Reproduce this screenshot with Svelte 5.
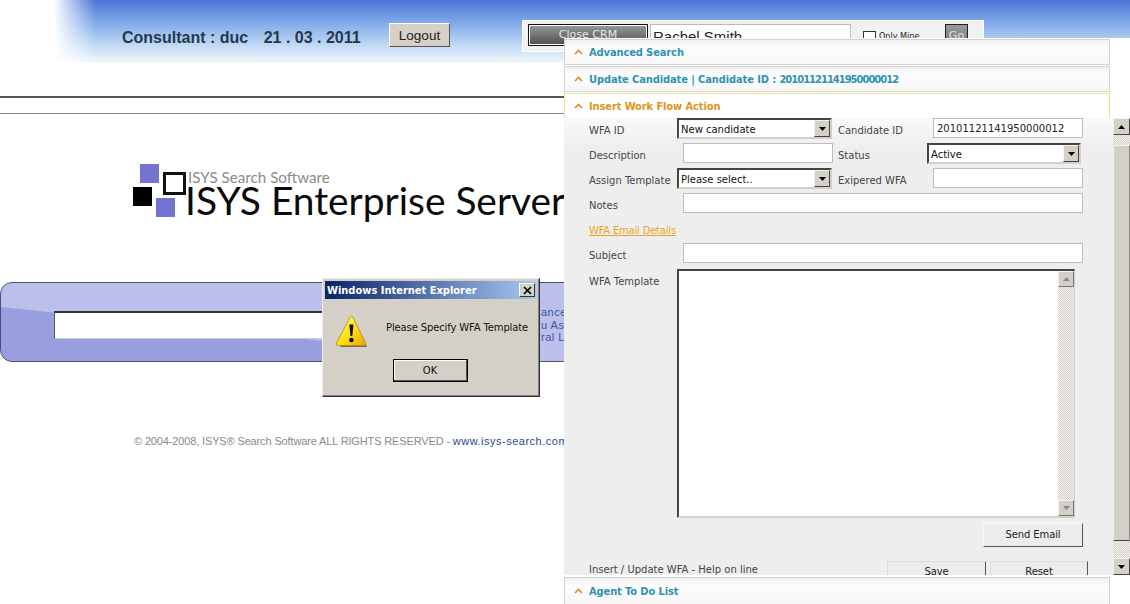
<script>
    const textBits = ['anced', 'u Ass', 'ral L'];
</script>

{#snippet chevron()}
    <svg class="chevron" width="9" height="6" viewBox="0 0 9 6"><path d="M1 5 L4.5 1.5 L8 5" fill="none" stroke="#d98a2b" stroke-width="1.6"/></svg>
{/snippet}

{#snippet arrow(dir, fill = '#000')}
    <svg width="7" height="4" viewBox="0 0 7 4">
        {#if dir === 'up'}
            <path d="M3.5 0 L7 4 L0 4 Z" {fill}/>
        {:else}
            <path d="M0 0 L7 0 L3.5 4 Z" {fill}/>
        {/if}
    </svg>
{/snippet}

{#snippet select(value, cls = '')}
    <div class="select {cls}">
        <span>{value}</span>
        <div class="sbtn">{@render arrow('down')}</div>
    </div>
{/snippet}

<div class="page">
    <header class="top">
        <div class="fade"></div>
        <div class="who">Consultant : duc <span class="date">21 . 03 . 2011</span></div>
        <button class="logout">Logout</button>
        <div class="quick">
            <div class="close-crm">Close CRM</div>
            <div class="quick-input">Rachel Smith</div>
            <div class="check"></div>
            <span class="mine">Only Mine</span>
            <div class="go">Go</div>
        </div>
    </header>

    <div class="rules"></div>

    <div class="logo">
        <svg width="54" height="55" viewBox="0 0 54 55">
            <rect x="7" y="0" width="19" height="19" fill="#7373d2"/>
            <rect x="31.500" y="9.500" width="20" height="20" fill="none" stroke="#111" stroke-width="3"/>
            <rect x="0" y="23" width="19" height="19" fill="#000"/>
            <rect x="23" y="34" width="19" height="19" fill="#7373d2"/>
        </svg>
        <div class="logo-text">
            <div class="logo-small">ISYS Search Software</div>
            <div class="logo-big">ISYS Enterprise Server</div>
        </div>
    </div>

    <div class="searchbar">
        <div class="search-input"></div>
        <div class="search-links">
            {#each textBits as bit}
                <div>{bit}</div>
            {/each}
        </div>
    </div>

    <div class="copy">© 2004-2008, ISYS® Search Software ALL RIGHTS RESERVED - <span class="link">www.isys-search.com</span></div>

    <div class="panel">
        <div class="acc">
            {@render chevron()}
            <span>Advanced Search</span>
        </div>
        <div class="acc">
            {@render chevron()}
            <span>Update Candidate | Candidate ID : <span class="digits">20101121141950000012</span></span>
        </div>
        <div class="acc active">
            {@render chevron()}
            <span>Insert Work Flow Action</span>
        </div>

        <div class="scroller">
            <div class="form">
                <div class="grid">
                    <span class="lbl">WFA ID</span>
                    {@render select('New candidate')}
                    <span class="lbl">Candidate ID</span>
                    <div class="input right">20101121141950000012</div>

                    <span class="lbl">Description</span>
                    <div class="input"></div>
                    <span class="lbl">Status</span>
                    {@render select('Active', 'narrow')}

                    <span class="lbl">Assign Template</span>
                    {@render select('Please select..')}
                    <span class="lbl">Exipered WFA</span>
                    <div class="input right"></div>

                    <span class="lbl">Notes</span>
                    <div class="input wide"></div>

                    <a class="email" href="#details">WFA Email Details</a>

                    <span class="lbl">Subject</span>
                    <div class="input wide"></div>
                </div>

                <div class="tpl-row">
                    <span class="lbl tpl-lbl">WFA Template</span>
                    <div class="textarea">
                        <div class="tscroll">
                            <div class="sbtn flat">{@render arrow('up', '#8a8a84')}</div>
                            <div class="track"></div>
                            <div class="sbtn flat">{@render arrow('down', '#8a8a84')}</div>
                        </div>
                    </div>
                </div>

                <div class="send-row">
                    <button class="btn send">Send Email</button>
                </div>

                <div class="foot">
                    <span class="help">Insert / Update WFA - Help on line</span>
                    <button class="btn save">Save</button>
                    <button class="btn reset">Reset</button>
                </div>
            </div>

            <div class="vscroll">
                <div class="sbtn big">{@render arrow('up')}</div>
                <div class="track short"></div>
                <div class="thumb"></div>
                <div class="track short2"></div>
                <div class="sbtn big">{@render arrow('down')}</div>
            </div>
        </div>

        <div class="acc last">
            {@render chevron()}
            <span>Agent To Do List</span>
        </div>
    </div>

    <div class="dialog">
        <div class="titlebar">
            <span>Windows Internet Explorer</span>
            <div class="x">
                <svg width="9" height="9" viewBox="0 0 9 9"><path d="M1 1 L8 8 M8 1 L1 8" stroke="#000" stroke-width="1.7"/></svg>
            </div>
        </div>
        <div class="dbody">
            <svg class="warn" width="32" height="34" viewBox="0 0 32 34">
                <defs>
                    <linearGradient id="warn-fill" x1="0" y1="0" x2="1" y2="1">
                        <stop offset="0" stop-color="#fff7a0"/>
                        <stop offset="0.55" stop-color="#ffdd10"/>
                        <stop offset="1" stop-color="#e8a800"/>
                    </linearGradient>
                </defs>
                <path d="M4 32 L31 32 L18 6 Z" fill="#77725c"/>
                <path d="M14.500 1.500 Q15.500 0.500 16.500 1.500 L29.500 28 Q30 30.500 28 30.500 L2 30.500 Q0 30.500 0.500 28 Z" fill="url(#warn-fill)" stroke="#b08a00" stroke-width="0.800"/>
                <path d="M13.300 9.500 L17.500 9.500 L16.300 21 L14.500 21 Z" fill="#111"/>
                <circle cx="15.400" cy="25" r="2.300" fill="#111"/>
            </svg>
            <span class="msg">Please Specify WFA Template</span>
        </div>
        <div class="dfoot">
            <button class="ok">OK</button>
        </div>
    </div>
</div>

<style>
    :global(body) {
        margin: 0;
        background: #fff;
    }

    .page {
        position: relative;
        width: 1130px;
        height: 604px;
        overflow: hidden;
        background: #fff;
        font-family: "DejaVu Sans", sans-serif;
        font-size: 10px;
        color: #222;
    }

    button {
        font-family: inherit;
        cursor: default;
    }

    /* header band */
    .top {
        position: relative;
        height: 63px;
        display: flex;
        align-items: flex-start;
        background: linear-gradient(180deg, #4874d8 0, #6b96e2 14px, #94b9ed 30px, #c6ddf5 47px, #eef6fc 62px, #fff 63px);
    }

    .fade {
        position: absolute;
        left: 0;
        top: 0;
        width: 96px;
        height: 100%;
        background: linear-gradient(90deg, #fff 54px, rgba(255, 255, 255, 0.65) 68px, rgba(255, 255, 255, 0));
    }

    .who {
        position: relative;
        margin: 29px 0 0 122px;
        width: 267px;
        font: bold 16px "Liberation Sans", Arial, sans-serif;
        color: #26374f;
        white-space: nowrap;
    }

    .date {
        margin-left: 11px;
    }

    .logout {
        position: relative;
        margin-top: 23px;
        width: 61px;
        height: 24px;
        padding: 0;
        background: #d6d0c6;
        border: 1px solid;
        border-color: #fff #555 #555 #fff;
        font: 13.500px "Liberation Sans", Arial, sans-serif;
        color: #222;
    }

    .quick {
        margin: 20px 0 0 72px;
        width: 462px;
        height: 32px;
        box-sizing: border-box;
        background: #f1f1f1;
        border: 1px solid #fff;
        padding: 3px 5px;
        display: flex;
        align-items: flex-start;
    }

    .close-crm {
        width: 120px;
        height: 22px;
        box-sizing: border-box;
        border: 1px solid #111;
        outline: 1px solid #fff;
        outline-offset: -2px;
        background: linear-gradient(180deg, #9a9a9a, #4e4e4e);
        text-align: center;
        color: #e8e8e8;
        font-size: 11px;
        line-height: 20px;
    }

    .quick-input {
        margin-left: 2px;
        width: 201px;
        height: 24px;
        box-sizing: border-box;
        background: #fff;
        border: 1px solid #bbb;
        padding-left: 2px;
        font: 15px/24px "Liberation Sans", Arial, sans-serif;
    }

    .check {
        margin: 7px 0 0 12px;
        width: 11px;
        height: 11px;
        border: 1px solid #333;
        background: #fff;
    }

    .mine {
        margin: 7px 0 0 3px;
        width: 66px;
        font: 9px "DejaVu Sans Condensed", "DejaVu Sans", sans-serif;
    }

    .go {
        width: 23px;
        height: 24px;
        box-sizing: border-box;
        border: 1px solid #222;
        background: linear-gradient(180deg, #999, #777);
        text-align: center;
        font-size: 11px;
        line-height: 22px;
        color: #e4e4e4;
    }

    .rules {
        margin-top: 33px;
        height: 15px;
        border-top: 2px solid #555;
        border-bottom: 1px solid #8a8a8a;
    }

    /* logo */
    .logo {
        margin: 50px 0 0 133px;
        display: flex;
        align-items: flex-start;
    }

    .logo-text {
        margin: 6px 0 0 -2px;
        font-family: Lato, "Open Sans", sans-serif;
        white-space: nowrap;
    }

    .logo-small {
        padding-left: 3px;
        font-size: 15.200px;
        line-height: 15px;
        color: #8b8b8b;
    }

    .logo-big {
        font-size: 38.900px;
        line-height: 30px;
        color: #0b0b0b;
    }

    /* search band */
    .searchbar {
        position: relative;
        margin-top: 63px;
        width: 610px;
        height: 80px;
        box-sizing: border-box;
        border: 1px solid #4b4f78;
        border-radius: 12px;
        background: linear-gradient(186deg, #bcbfea 0, #bcbfea 87px, #999ede 88px, #999ede 100%);
    }

    .search-input {
        position: absolute;
        left: 53px;
        top: 28px;
        width: 300px;
        height: 28px;
        box-sizing: border-box;
        background: #fff;
        border-top: 2px solid #333;
        border-left: 1px solid #555;
        border-bottom: 1px solid #ccc;
    }

    .search-links {
        position: absolute;
        left: 540px;
        top: 23px;
        font: 11px/12.500px "Liberation Sans", Arial, sans-serif;
        letter-spacing: 0.5px;
        color: #3a55a8;
    }

    .copy {
        margin: 73px 0 0 134px;
        font: 11px "Liberation Sans", Arial, sans-serif;
        color: #8a8a8a;
        letter-spacing: -0.14px;
        white-space: nowrap;
    }

    .link {
        color: #2b4890;
        letter-spacing: 0.5px;
    }

    /* slide-over panel */
    .panel {
        position: absolute;
        left: 564px;
        top: 38px;
        width: 566px;
        height: 566px;
        box-sizing: border-box;
        padding-top: 1px;
        background: #fff;
        display: flex;
        flex-direction: column;
    }

    .acc {
        width: 546px;
        height: 26px;
        margin-bottom: 1px;
        box-sizing: border-box;
        flex: none;
        display: flex;
        align-items: center;
        gap: 6px;
        padding-left: 9px;
        background: linear-gradient(180deg, #f0f0f0, #fdfdfd 30%, #f7f7f7);
        border: 1px solid #d2d2d2;
        color: #2e93b3;
        font: bold 11px "DejaVu Sans Condensed", "DejaVu Sans", sans-serif;
        letter-spacing: -0.1px;
        white-space: pre;
    }

    .digits {
        letter-spacing: -0.95px;
    }

    .acc.active {
        height: 25px;
        margin-bottom: 0;
        background: #fff;
        border-color: #f2df8e;
        border-bottom: none;
        color: #e0951a;
    }

    .acc.last {
        margin: 2px 0 0;
        height: 27px;
        border-bottom: none;
    }

    .chevron {
        flex: none;
    }

    .scroller {
        height: 457px;
        flex: none;
        display: flex;
        overflow: hidden;
        background: linear-gradient(180deg, #fafafa, #eeeeee 30px);
    }

    .form {
        width: 549px;
        box-sizing: border-box;
        padding-left: 25px;
    }

    .grid {
        display: grid;
        grid-template-columns: 88px 161px 89px 156px;
        grid-auto-rows: 25px;
        align-items: start;
    }

    .lbl {
        color: #444;
        white-space: nowrap;
        padding-top: 7px;
    }

    .input {
        height: 20px;
        box-sizing: border-box;
        margin-left: 6px;
        width: 150px;
        background: #fff;
        border: 1px solid #bdbdbd;
        padding-left: 3px;
        line-height: 19px;
        color: #222;
    }

    .input.wide {
        grid-column: 2 / 5;
        width: 400px;
    }

    .select {
        width: 155px;
        height: 21px;
        box-sizing: border-box;
        display: flex;
        justify-content: space-between;
        align-items: stretch;
        background: #fff;
        border: 2px solid;
        border-color: #444 #d4d0c8 #d4d0c8 #444;
        padding-left: 2px;
        line-height: 19px;
        color: #111;
    }

    .select.narrow {
        width: 154px;
    }

    .sbtn {
        width: 16px;
        flex: none;
        box-sizing: border-box;
        display: flex;
        align-items: center;
        justify-content: center;
        background: #d4d0c8;
        border: 1px solid;
        border-color: #f4f2ee #444 #444 #f4f2ee;
    }

    .sbtn.big {
        width: 17px;
        height: 17px;
    }

    .sbtn.flat {
        height: 16px;
        border-color: #f4f2ee #777 #777 #f4f2ee;
    }

    .email {
        grid-column: 1 / 5;
        padding-top: 7px;
        justify-self: start;
        color: #efa31d;
        text-decoration: underline;
        font-size: 10px;
        letter-spacing: -0.2px;
    }

    .tpl-row {
        display: flex;
        margin-top: 1px;
    }

    .tpl-lbl {
        width: 88px;
    }

    .textarea {
        width: 398px;
        height: 249px;
        box-sizing: border-box;
        background: #fff;
        border: 2px solid;
        border-color: #444 #d4d0c8 #d4d0c8 #444;
        border-right-width: 1px;
        display: flex;
        justify-content: flex-end;
    }

    .tscroll {
        width: 16px;
        display: flex;
        flex-direction: column;
    }

    .track {
        flex: 1;
        background: repeating-conic-gradient(#d4d0c8 0 25%, #f4f4f2 0 50%) 0 0 / 2px 2px;
    }

    .send-row {
        margin-top: 5px;
        display: flex;
        justify-content: flex-end;
        padding-right: 30px;
    }

    .btn {
        width: 100px;
        height: 24px;
        padding: 0 0 2px;
        background: #ececec;
        border: 1px solid;
        border-color: #f8f8f8 #555 #555 #f8f8f8;
        font-size: 10px;
        letter-spacing: -0.1px;
        color: #222;
    }

    .foot {
        margin-top: 14px;
        display: flex;
        align-items: flex-start;
    }

    .help {
        margin-top: 3px;
        width: 298px;
        color: #444;
    }

    .foot .btn {
        border-top-color: #ddd;
        border-left-color: #ddd;
        padding-bottom: 3px;
    }

    .save {
        width: 99px;
        margin-right: 4px;
    }

    .reset {
        width: 98px;
    }

    .vscroll {
        width: 17px;
        flex: none;
        display: flex;
        flex-direction: column;
    }

    .vscroll .short {
        flex: none;
        height: 10px;
    }

    .vscroll .short2 {
        flex: none;
        height: 17px;
    }

    .thumb {
        flex: 1;
        background: #d4d0c8;
        border-left: 1px solid #f4f2ee;
        border-top: 1px solid #f4f2ee;
        border-bottom: 1px solid #444;
        border-right: 1px solid #888;
    }

    /* alert */
    .dialog {
        position: absolute;
        left: 322px;
        top: 278px;
        width: 218px;
        height: 119px;
        box-sizing: border-box;
        background: #d4d0c8;
        border: 1px solid;
        border-color: #eee #333 #333 #eee;
        box-shadow: inset -1px -1px 0 #808080;
        padding: 2px;
        display: flex;
        flex-direction: column;
    }

    .titlebar {
        height: 18px;
        flex: none;
        display: flex;
        align-items: center;
        justify-content: space-between;
        padding: 0 2px 0 2px;
        background: linear-gradient(90deg, #0a246a, #a6caf0);
        color: #fff;
        font: bold 11px "DejaVu Sans Condensed", "DejaVu Sans", sans-serif;
    }

    .x {
        width: 16px;
        height: 14px;
        box-sizing: border-box;
        display: flex;
        align-items: center;
        justify-content: center;
        background: #d4d0c8;
        border: 1px solid;
        border-color: #fff #333 #333 #fff;
    }

    .dbody {
        height: 60px;
        flex: none;
        display: flex;
        align-items: center;
        padding-left: 11px;
    }

    .warn {
        margin-top: 5px;
    }

    .msg {
        margin: 0 0 3px 18px;
        color: #111;
        letter-spacing: -0.13px;
        white-space: nowrap;
    }

    .dfoot {
        display: flex;
        justify-content: center;
        padding-right: 2px;
    }

    .ok {
        width: 75px;
        height: 23px;
        padding: 0;
        background: #d4d0c8;
        border: 1px solid #000;
        box-shadow: inset -1px -1px 0 #555, inset 1px 1px 0 #fff;
        font-size: 10px;
        color: #111;
    }
</style>
